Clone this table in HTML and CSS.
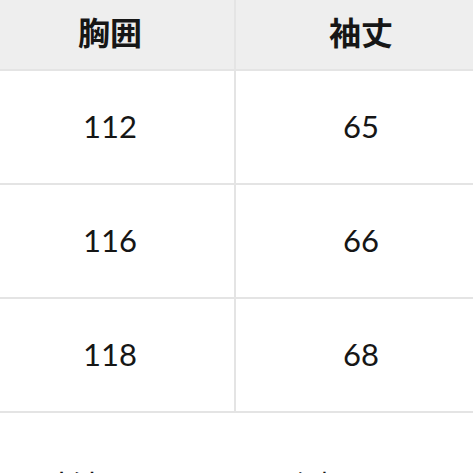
FILE: index.html
```html
<!DOCTYPE html>
<html lang="ja">
<head>
<meta charset="utf-8">
<link rel="stylesheet" href="styles.css">
</head>
<body>
<div class="size-table">
  <div class="cell head left">胸囲</div>
  <div class="cell head">袖丈</div>
  <div class="cell left">112</div>
  <div class="cell">65</div>
  <div class="cell left">116</div>
  <div class="cell">66</div>
  <div class="cell left">118</div>
  <div class="cell">68</div>
</div>
<p class="note">※寸法は平置きにて測っております。</p>
</body>
</html>
```
FILE: styles.css
```css
html, body {
  margin: 0;
  padding: 0;
  background: #ffffff;
  overflow: hidden;
}
body {
  width: 473px;
  height: 473px;
  font-family: "Lato", "Noto Sans CJK JP", sans-serif;
  color: #161616;
}
.size-table {
  display: grid;
  grid-template-columns: 250px 250px;
  grid-auto-rows: 114px;
  grid-template-rows: 74px;
  margin: -3px 0 0 -14px;
}
.cell {
  box-sizing: border-box;
  border-bottom: 2px solid #e4e4e4;
  display: flex;
  align-items: center;
  justify-content: center;
  font-size: 31px;
  padding-bottom: 2px;
}
.cell.left {
  border-right: 2px solid #e4e4e4;
}
.head {
  background: #eeeeee;
  font-family: "Noto Sans CJK JP", sans-serif;
  font-weight: 700;
  font-size: 32px;
  padding-bottom: 4px;
}
.note {
  margin: 52px 0 0 8px;
  font-family: "Noto Sans CJK JP", sans-serif;
  font-size: 32px;
  line-height: 40px;
  white-space: nowrap;
}
```
